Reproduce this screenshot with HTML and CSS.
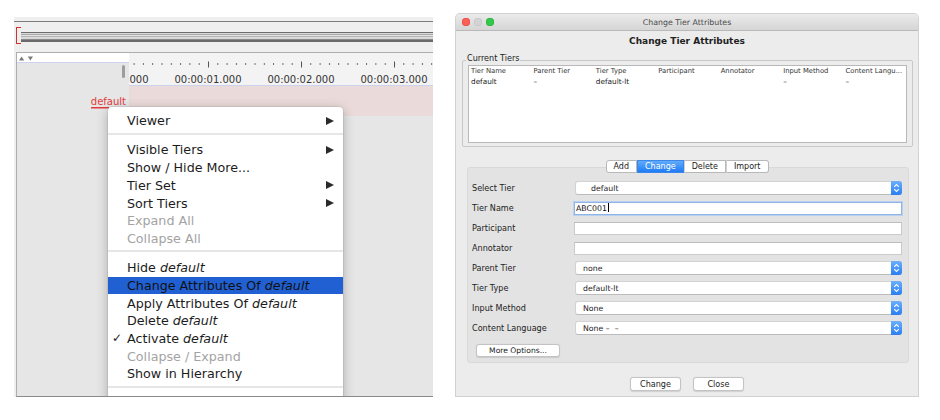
FILE: index.html
```html
<!DOCTYPE html>
<html>
<head>
<meta charset="utf-8">
<title>Change Tier Attributes</title>
<link rel="stylesheet" href="styles.css">
</head>
<body>
<div class="page">
  <section class="editor">
    <div class="toolbar">
      <div class="toolbar-rule"></div>
      <div class="toolbar-track">
        <div class="bracket"></div>
        <div class="bars"></div>
      </div>
    </div>
    <div class="viewer">
      <div class="viewer-head">
        <div class="head-left">
          <div class="corner">
            <svg width="16" height="5" viewBox="0 0 16 5"><polygon points="0,4.5 2.6,0.5 5.2,4.5" fill="#7a7a7a"/><polygon points="8.8,0.5 14,0.5 11.4,4.5" fill="#7a7a7a"/></svg>
          </div>
          <div class="thumb-area"><div class="thumb"></div></div>
        </div>
        <div class="ruler">
          <svg class="ticks" width="304" height="21" viewBox="0 0 304 21">
            <defs>
              <pattern id="minor" x="4.6" y="0" width="9.3" height="21" patternUnits="userSpaceOnUse">
                <rect x="0" y="10" width="1" height="2" fill="#6a6a6a"/>
              </pattern>
            </defs>
            <rect x="0" y="0" width="304" height="21" fill="url(#minor)"/>
            <rect x="79" y="8.5" width="1" height="6" fill="#555"/>
            <rect x="172" y="8.5" width="1" height="6" fill="#555"/>
            <rect x="265" y="8.5" width="1" height="6" fill="#555"/>
          </svg>
          <div class="time-labels">
            <span>00:00:00.000</span><span>00:00:01.000</span><span>00:00:02.000</span><span>00:00:03.000</span><span>00:00:04.000</span>
          </div>
        </div>
      </div>
      <div class="tier-row">
        <div class="tier-label"><span class="tier-name">default</span></div>
        <div class="tier-track"></div>
      </div>
      <ul class="menu">
        <li class="item"><span class="check"></span><span>Viewer</span><span class="arrow"></span></li>
        <li class="sep"></li>
        <li class="item"><span class="check"></span><span>Visible Tiers</span><span class="arrow"></span></li>
        <li class="item"><span class="check"></span><span>Show / Hide More...</span></li>
        <li class="item"><span class="check"></span><span>Tier Set</span><span class="arrow"></span></li>
        <li class="item"><span class="check"></span><span>Sort Tiers</span><span class="arrow"></span></li>
        <li class="item disabled"><span class="check"></span><span>Expand All</span></li>
        <li class="item disabled"><span class="check"></span><span>Collapse All</span></li>
        <li class="sep"></li>
        <li class="item"><span class="check"></span><span>Hide <em>default</em></span></li>
        <li class="item active"><span class="check"></span><span>Change Attributes Of <em>default</em></span></li>
        <li class="item"><span class="check"></span><span>Apply Attributes Of <em>default</em></span></li>
        <li class="item"><span class="check"></span><span>Delete <em>default</em></span></li>
        <li class="item"><span class="check">✓</span><span>Activate <em>default</em></span></li>
        <li class="item disabled"><span class="check"></span><span>Collapse / Expand</span></li>
        <li class="item"><span class="check"></span><span>Show in Hierarchy</span></li>
        <li class="sep"></li>
        <li class="item"><span class="check"></span><span>Change Tier Order</span></li>
      </ul>
    </div>
  </section>

  <section class="dialog">
    <header class="titlebar">
      <div class="lights"><span class="light red"></span><span class="light grey"></span><span class="light green"></span></div>
      <div class="title">Change Tier Attributes</div>
      <div></div>
    </header>
    <div class="dialog-body">
      <h1 class="heading">Change Tier Attributes</h1>
      <fieldset class="group">
        <legend>Current Tiers</legend>
        <div class="table">
          <div class="thead"><span>Tier Name</span><span>Parent Tier</span><span>Tier Type</span><span>Participant</span><span>Annotator</span><span>Input Method</span><span>Content Langu...</span></div>
          <div class="trow"><span>default</span><span>–</span><span>default-lt</span><span></span><span></span><span>–</span><span>–</span></div>
        </div>
      </fieldset>
      <div class="tabs">
        <button class="tab">Add</button><button class="tab selected">Change</button><button class="tab">Delete</button><button class="tab">Import</button>
      </div>
      <div class="form">
        <div class="form-grid">
          <label>Select Tier</label>
          <div class="combo"><span class="combo-text wide">default</span><span class="stepper"><svg width="7" height="10" viewBox="0 0 7 10"><path d="M1.2 3.8 L3.5 1.6 L5.8 3.8 M1.2 6.2 L3.5 8.4 L5.8 6.2" fill="none" stroke="#fff" stroke-width="1.1"/></svg></span></div>
          <label>Tier Name</label>
          <div class="field focus">ABC001<span class="caret"></span></div>
          <label>Participant</label>
          <div class="field"></div>
          <label>Annotator</label>
          <div class="field"></div>
          <label>Parent Tier</label>
          <div class="combo"><span class="combo-text">none</span><span class="stepper"><svg width="7" height="10" viewBox="0 0 7 10"><path d="M1.2 3.8 L3.5 1.6 L5.8 3.8 M1.2 6.2 L3.5 8.4 L5.8 6.2" fill="none" stroke="#fff" stroke-width="1.1"/></svg></span></div>
          <label>Tier Type</label>
          <div class="combo"><span class="combo-text">default-lt</span><span class="stepper"><svg width="7" height="10" viewBox="0 0 7 10"><path d="M1.2 3.8 L3.5 1.6 L5.8 3.8 M1.2 6.2 L3.5 8.4 L5.8 6.2" fill="none" stroke="#fff" stroke-width="1.1"/></svg></span></div>
          <label>Input Method</label>
          <div class="combo"><span class="combo-text">None</span><span class="stepper"><svg width="7" height="10" viewBox="0 0 7 10"><path d="M1.2 3.8 L3.5 1.6 L5.8 3.8 M1.2 6.2 L3.5 8.4 L5.8 6.2" fill="none" stroke="#fff" stroke-width="1.1"/></svg></span></div>
          <label>Content Language</label>
          <div class="combo"><span class="combo-text">None –&nbsp; –</span><span class="stepper"><svg width="7" height="10" viewBox="0 0 7 10"><path d="M1.2 3.8 L3.5 1.6 L5.8 3.8 M1.2 6.2 L3.5 8.4 L5.8 6.2" fill="none" stroke="#fff" stroke-width="1.1"/></svg></span></div>
        </div>
        <button class="btn more">More Options...</button>
      </div>
      <div class="actions">
        <button class="btn">Change</button>
        <button class="btn">Close</button>
      </div>
    </div>
  </section>
</div>
</body>
</html>
```

FILE: styles.css
```css
* { box-sizing: border-box; }

body {
  margin: 0;
  background: #ffffff;
  font-family: "DejaVu Sans", "Liberation Sans", sans-serif;
  color: #1c1c1c;
}

.page {
  display: flex;
  align-items: flex-start;
  padding-left: 14px;
}

/* ---------- left: annotation editor ---------- */
.editor {
  width: 419px;
  margin-top: 17px;
  background: #efefef;
}

.toolbar {
  height: 35px;
  padding-top: 4px;
}

.toolbar-rule {
  height: 1px;
  background: #7c7c7c;
}

.toolbar-track {
  display: flex;
  height: 18px;
  margin-top: 5px;
}

.bracket {
  width: 5px;
  height: 17px;
  margin-left: 2px;
  border: 1.5px solid #d3332f;
  border-right: none;
}

.bars {
  flex: 1;
  height: 10px;
  margin-top: 5px;
  background: linear-gradient(#6c6c6c 0 1px, #dadada 1px 2px, #a9a9a9 2px 3px, #e2e2e2 3px 4px, #b4b4b4 4px 5px, #d9d9d9 5px 7px, #8a8a8a 7px 8px, #6a6a6a 8px 10px);
}

.viewer {
  position: relative;
  height: 345px;
  margin-left: 2px;
  background: #e6e6e6;
  border-top: 1px solid #adadad;
  border-left: 1px solid #adadad;
  border-bottom: 1px solid #8a8a8a;
  overflow: hidden;
}

.viewer-head {
  display: grid;
  grid-template-columns: 112px 1fr;
  height: 33px;
}

.head-left {
  display: flex;
  flex-direction: column;
}

.corner {
  height: 10px;
  background: #ffffff;
  border-bottom: 1px solid #cdd5ee;
  padding: 3px 0 0 2px;
  line-height: 0;
}

.thumb-area {
  flex: 1;
  display: flex;
  justify-content: flex-end;
  padding: 2px 4px 0 0;
}

.thumb {
  width: 3px;
  height: 13px;
  border-radius: 2px;
  background: #9d9d9d;
}

.ruler {
  height: 33px;
  background: #f3f3f3;
  border-bottom: 1px solid #cbd3ec;
  overflow: hidden;
}

.ticks {
  display: block;
}

.time-labels {
  display: flex;
  margin-left: -60.5px;
}

.time-labels span {
  flex: none;
  width: 93px;
  text-align: center;
  font-size: 10px;
  line-height: 11px;
  color: #333333;
}

.tier-row {
  display: grid;
  grid-template-columns: 112px 1fr;
  height: 30px;
}

.tier-label {
  display: flex;
  align-items: center;
  justify-content: flex-end;
  padding: 2px 3px 0 0;
}

.tier-name {
  font-size: 10px;
  line-height: 12px;
  color: #e33b3b;
  padding-bottom: 1px;
  background: linear-gradient(#e33b3b, #e33b3b) left bottom / 18px 1.5px no-repeat;
}

.tier-track {
  background: #eadada;
}

/* context menu */
.menu {
  position: absolute;
  top: 54px;
  left: 91px;
  width: 235px;
  margin: 0;
  padding: 4.85px 0 0;
  list-style: none;
  background: #ffffff;
  border-radius: 4px;
  box-shadow: 0 3px 12px rgba(0, 0, 0, 0.28), 0 0 0 0.5px rgba(0, 0, 0, 0.12);
  font-size: 12.7px;
  color: #1c1c1c;
}

.item {
  display: flex;
  align-items: center;
  height: 17.7px;
  padding-left: 4px;
  white-space: nowrap;
}

.item em {
  font-style: italic;
}

.check {
  flex: none;
  width: 15px;
  font-size: 12px;
}

.arrow {
  margin-left: auto;
  margin-right: 9px;
  border-left: 8px solid #2a2a2a;
  border-top: 4.5px solid transparent;
  border-bottom: 4.5px solid transparent;
}

.item.disabled {
  color: #a3a3a3;
}

.item.active {
  background: #2160d3;
  color: #111111;
}

.sep {
  height: 11.6px;
  padding-top: 3px;
}

.sep::before {
  content: "";
  display: block;
  height: 2px;
  background: #e6e6e6;
}

/* ---------- right: dialog ---------- */
.dialog {
  width: 462px;
  margin-top: 14px;
  margin-left: 23px;
  background: #ececec;
  border-radius: 4px 4px 0 0;
  box-shadow: 0 0 0 1px #d2d2d2;
}

.titlebar {
  display: grid;
  grid-template-columns: 1fr auto 1fr;
  align-items: center;
  height: 17px;
  background: linear-gradient(#ebebeb, #d5d5d5);
  border-bottom: 1px solid #b9b9b9;
  border-radius: 4px 4px 0 0;
}

.lights {
  display: flex;
  gap: 4px;
  padding-left: 6px;
}

.light {
  width: 8px;
  height: 8px;
  border-radius: 50%;
}

.light.red { background: #fc5f57; box-shadow: inset 0 0 0 0.5px #df4744; }
.light.grey { background: #d3d3d3; box-shadow: inset 0 0 0 0.5px #c2c2c2; }
.light.green { background: #34c84a; box-shadow: inset 0 0 0 0.5px #2aa83b; }

.title {
  font-size: 7.85px;
  color: #4a4a4a;
}

.dialog-body {
  padding-bottom: 5px;
}

.heading {
  margin: 4px 0 0;
  font-size: 9px;
  font-weight: bold;
  line-height: 12px;
  text-align: center;
  color: #222222;
}

.group {
  margin: 6px 5px 0 6px;
  padding: 0 5px 3px;
  min-width: 0;
  border: 1px solid #c8c8c8;
  border-radius: 2px;
}

.group legend {
  margin-left: -2px;
  padding: 0 1px 5px;
  font-size: 8.1px;
  line-height: 10px;
  color: #222222;
}

.table {
  margin-top: -3px;
  height: 78px;
  background: #ffffff;
  border: 1px solid #b9b9b9;
}

.thead,
.trow {
  display: grid;
  grid-template-columns: repeat(7, 1fr);
}

.thead span,
.trow span {
  padding-left: 2px;
  overflow: hidden;
  white-space: nowrap;
}

.thead {
  height: 11px;
  font-size: 6.8px;
  line-height: 11px;
  color: #333333;
}

.trow {
  height: 10px;
  font-size: 7.3px;
  line-height: 10px;
  color: #222222;
}

.tabs {
  position: relative;
  z-index: 1;
  display: flex;
  justify-content: center;
  margin: 13px 0 -6px;
}

.tab {
  height: 13px;
  padding: 0 7px;
  font-family: inherit;
  font-size: 8px;
  line-height: 11px;
  color: #222222;
  background: #ffffff;
  border: 1px solid #b8b8b8;
  border-left: 1px solid #d0d0d0;
}

.tab:first-child {
  border-left-color: #b8b8b8;
  border-radius: 3px 0 0 3px;
}

.tab:last-child {
  border-radius: 0 3px 3px 0;
}

.tab.selected {
  background: linear-gradient(#62abfb, #1f7cf5);
  border-color: #3a86ea;
  color: #ffffff;
}

.form {
  margin: 0 9px 0 11px;
  padding: 13px 6px 5px 4px;
  background: #e3e3e3;
  border: 1px solid #d9d9d9;
  border-radius: 3px;
}

.form-grid {
  display: grid;
  grid-template-columns: 102px 1fr;
  grid-auto-rows: 14px;
  row-gap: 6px;
  align-items: center;
}

.form-grid label {
  font-size: 8.1px;
  color: #222222;
}

.combo {
  display: flex;
  align-items: center;
  height: 14px;
  margin-left: 1px;
  background: #ffffff;
  border: 1px solid #d2d2d2;
  border-bottom-color: #bcbcbc;
  border-radius: 3px;
  font-size: 7.8px;
  color: #222222;
}

.combo-text {
  flex: 1;
  padding-left: 7px;
  white-space: pre;
}

.combo-text.wide {
  padding-left: 15px;
}

.stepper {
  display: flex;
  align-items: center;
  justify-content: center;
  width: 11px;
  height: 14px;
  margin: -1px -1px -1px 0;
  border-radius: 0 3px 3px 0;
  background: linear-gradient(#6cb0fd, #2a7df2);
}

.field {
  height: 13px;
  padding-left: 1px;
  background: #ffffff;
  border: 1px solid #cacaca;
  border-top-color: #bdbdbd;
  font-size: 7.8px;
  line-height: 11px;
  color: #111111;
}

.field.focus {
  border-color: #8fb3e3;
  box-shadow: 0 0 0 1px #b9d0f0;
}

.caret {
  display: inline-block;
  width: 1px;
  height: 9px;
  margin-left: 1px;
  vertical-align: -1px;
  background: #000000;
}

.btn {
  height: 14px;
  padding: 0;
  font-family: inherit;
  font-size: 8.1px;
  line-height: 12px;
  color: #222222;
  background: #ffffff;
  border: 1px solid #c3c3c3;
  border-radius: 3px;
  box-shadow: 0 0.5px 1px rgba(0, 0, 0, 0.12);
}

.btn.more {
  display: block;
  width: 84px;
  height: 13px;
  margin: 9px 0 0 4px;
  font-size: 7.6px;
  line-height: 11px;
}

.actions {
  display: flex;
  justify-content: center;
  gap: 12px;
  margin-top: 14px;
}

.actions .btn {
  width: 51px;
}
```
